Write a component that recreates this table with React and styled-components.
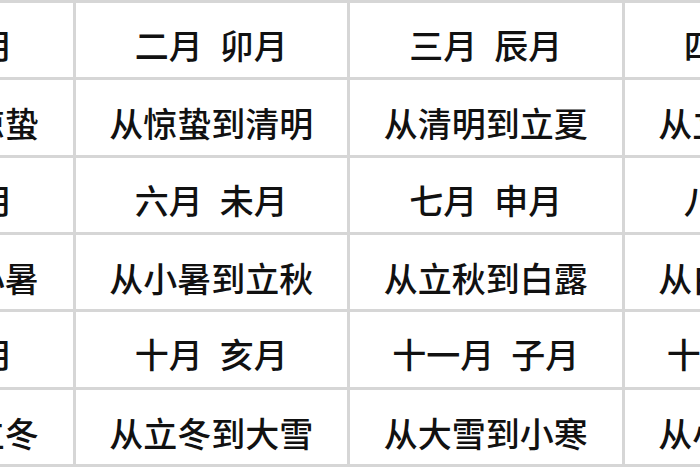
import React from 'react';
import styled, { createGlobalStyle } from 'styled-components';

const GlobalStyle = createGlobalStyle`
  html, body {
    margin: 0;
    padding: 0;
    background: #ffffff;
  }
  body {
    width: 700px;
    height: 470px;
    overflow: hidden;
  }
`;

const Frame = styled.div`
  width: 700px;
  height: 470px;
  overflow: hidden;
  background: #ffffff;
`;

const Grid = styled.div`
  display: grid;
  grid-template-columns: repeat(4, 271.5px);
  grid-auto-rows: 74.33px;
  gap: 3px;
  padding: 3px;
  width: max-content;
  margin-left: -202px;
  background: #d6d6d6;
`;

const Cell = styled.div`
  background: #ffffff;
  display: flex;
  align-items: center;
  justify-content: center;
  padding-top: ${p => (p.$kind === 'month' ? 10 : 12)}px;
  box-sizing: border-box;
  font-family: "Noto Sans CJK SC", "Noto Sans", sans-serif;
  font-size: 34px;
  font-weight: 500;
  line-height: 1;
  color: #111111;
  white-space: pre;
  word-spacing: 0.28em;
`;

const rows = [
  ['正月 寅月', '二月 卯月', '三月 辰月', '四月 巳月'],
  ['从立春到惊蛰', '从惊蛰到清明', '从清明到立夏', '从立夏到芒种'],
  ['五月 午月', '六月 未月', '七月 申月', '八月 酉月'],
  ['从芒种到小暑', '从小暑到立秋', '从立秋到白露', '从白露到寒露'],
  ['九月 戌月', '十月 亥月', '十一月 子月', '十二月 丑月'],
  ['从寒露到立冬', '从立冬到大雪', '从大雪到小寒', '从小寒到立春'],
];

export default function App() {
  return (
    <>
      <GlobalStyle />
      <Frame>
        <Grid>
          {rows.map((row, r) =>
            row.map((text, c) => (
              <Cell key={`${r}-${c}`} $kind={r % 2 === 0 ? 'month' : 'range'}>
                {text}
              </Cell>
            ))
          )}
        </Grid>
      </Frame>
    </>
  );
}
